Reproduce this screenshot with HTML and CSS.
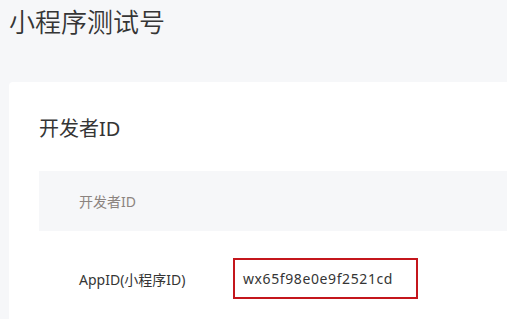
FILE: index.html
```html
<!DOCTYPE html>
<html lang="zh-CN">
<head>
<meta charset="utf-8">
<link rel="stylesheet" href="styles.css">
</head>
<body>
<h1 class="page-title">小程序测试号</h1>
<div class="card">
  <h2 class="card-title">开发者ID</h2>
  <div class="table">
    <div class="thead">开发者ID</div>
    <div class="row">
      <div class="label">AppID(小程序ID)</div>
      <div class="value"><span class="mark">wx65f98e0e9f2521cd</span></div>
    </div>
  </div>
</div>
</body>
</html>
```

FILE: styles.css
```css
html, body {
  margin: 0;
  padding: 0;
}
body {
  background: #f6f7f9;
  font-family: "Noto Sans", "Noto Sans CJK SC", sans-serif;
  color: #353535;
  width: 507px;
  height: 319px;
  overflow: hidden;
}
.page-title {
  margin: 0;
  padding: 4px 0 0 9px;
  font-size: 26px;
  font-weight: 350;
  line-height: 36px;
  color: #353535;
}
.card {
  margin: 42px 0 0 9px;
  background: #fff;
  border-radius: 4px 0 0 0;
  padding: 33px 0 0 30px;
  height: 204px;
}
.card-title {
  margin: 0;
  font-size: 20px;
  font-weight: 400;
  line-height: 28px;
  color: #353535;
}
.table {
  margin-top: 28px;
}
.thead {
  height: 60px;
  background: #f6f7f9;
  padding-left: 40px;
  display: flex;
  align-items: center;
  font-size: 14px;
  color: #8c8480;
}
.row {
  display: flex;
  align-items: center;
  padding-top: 27px;
  font-size: 14px;
}
.label {
  width: 194px;
  padding-left: 40px;
  box-sizing: border-box;
  color: #353535;
}
.mark {
  display: flex;
  align-items: center;
  box-sizing: border-box;
  width: 185px;
  height: 41px;
  padding-left: 8px;
  border: 2px solid #c4161c;
  color: #353535;
  letter-spacing: 0.6px;
}
```
